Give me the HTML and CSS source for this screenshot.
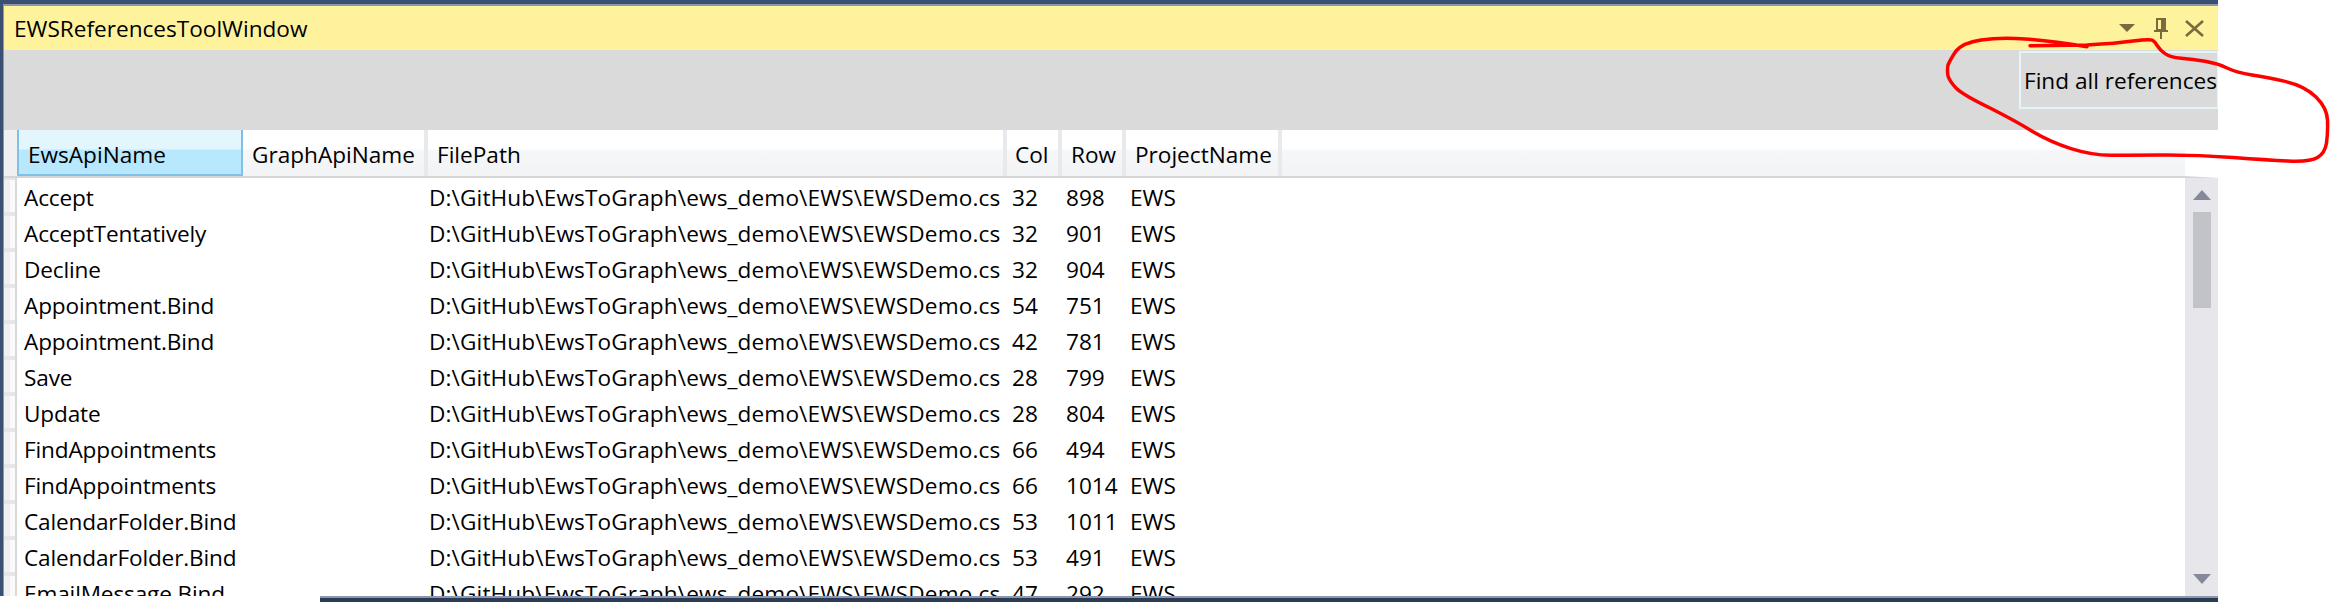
FILE: index.html
```html
<!DOCTYPE html>
<html lang="en">
<head>
    <meta charset="UTF-8">
    <title>EWSReferencesToolWindow</title>
    <link rel="stylesheet" href="styles.css">
</head>
<body>
    <div class="window">
        <div class="titlebar">
            <span class="title">EWSReferencesToolWindow</span>
            <div class="title-icons">
                <svg width="16" height="8" viewBox="0 0 16 8"><path d="M0 0H16L8 8Z" fill="#7a6a3e"/></svg>
                <svg class="pin" width="14" height="21" viewBox="0 0 14 21"><path d="M3 1H11V12H3Z" fill="none" stroke="#7a6a3e" stroke-width="2"/><path d="M7 0H12V13H7ZM0 12H14V14H0ZM6 14H8V21H6Z" fill="#7a6a3e"/></svg>
                <svg width="19" height="17" viewBox="0 0 19 17"><path d="M1 1L18 16M18 1L1 16" fill="none" stroke="#7a6a3e" stroke-width="2.6"/></svg>
            </div>
        </div>
        <div class="toolbar">
            <button class="find-btn">Find all references</button>
        </div>
        <div class="header">
            <div class="gutter-head"></div>
            <div class="col-head active c-name">EwsApiName</div>
            <div class="col-head c-graph">GraphApiName</div>
            <div class="col-head c-path">FilePath</div>
            <div class="col-head c-col">Col</div>
            <div class="col-head c-row">Row</div>
            <div class="col-head c-proj">ProjectName</div>
            <div class="col-head filler"></div>
        </div>
        <div class="body">
            <div class="rows">
                <div class="row"><i></i><span>Accept</span><span></span><span>D:\GitHub\EwsToGraph\ews_demo\EWS\EWSDemo.cs</span><span>32</span><span>898</span><span>EWS</span></div>
                <div class="row"><i></i><span>AcceptTentatively</span><span></span><span>D:\GitHub\EwsToGraph\ews_demo\EWS\EWSDemo.cs</span><span>32</span><span>901</span><span>EWS</span></div>
                <div class="row"><i></i><span>Decline</span><span></span><span>D:\GitHub\EwsToGraph\ews_demo\EWS\EWSDemo.cs</span><span>32</span><span>904</span><span>EWS</span></div>
                <div class="row"><i></i><span>Appointment.Bind</span><span></span><span>D:\GitHub\EwsToGraph\ews_demo\EWS\EWSDemo.cs</span><span>54</span><span>751</span><span>EWS</span></div>
                <div class="row"><i></i><span>Appointment.Bind</span><span></span><span>D:\GitHub\EwsToGraph\ews_demo\EWS\EWSDemo.cs</span><span>42</span><span>781</span><span>EWS</span></div>
                <div class="row"><i></i><span>Save</span><span></span><span>D:\GitHub\EwsToGraph\ews_demo\EWS\EWSDemo.cs</span><span>28</span><span>799</span><span>EWS</span></div>
                <div class="row"><i></i><span>Update</span><span></span><span>D:\GitHub\EwsToGraph\ews_demo\EWS\EWSDemo.cs</span><span>28</span><span>804</span><span>EWS</span></div>
                <div class="row"><i></i><span>FindAppointments</span><span></span><span>D:\GitHub\EwsToGraph\ews_demo\EWS\EWSDemo.cs</span><span>66</span><span>494</span><span>EWS</span></div>
                <div class="row"><i></i><span>FindAppointments</span><span></span><span>D:\GitHub\EwsToGraph\ews_demo\EWS\EWSDemo.cs</span><span>66</span><span>1014</span><span>EWS</span></div>
                <div class="row"><i></i><span>CalendarFolder.Bind</span><span></span><span>D:\GitHub\EwsToGraph\ews_demo\EWS\EWSDemo.cs</span><span>53</span><span>1011</span><span>EWS</span></div>
                <div class="row"><i></i><span>CalendarFolder.Bind</span><span></span><span>D:\GitHub\EwsToGraph\ews_demo\EWS\EWSDemo.cs</span><span>53</span><span>491</span><span>EWS</span></div>
                <div class="row"><i></i><span>EmailMessage.Bind</span><span></span><span>D:\GitHub\EwsToGraph\ews_demo\EWS\EWSDemo.cs</span><span>47</span><span>292</span><span>EWS</span></div>
            </div>
            <div class="scrollbar">
                <svg width="18" height="10" viewBox="0 0 18 10"><path d="M0 10L9 0L18 10Z" fill="#868999"/></svg>
                <div class="thumb"></div>
                <div class="track"></div>
                <svg width="18" height="10" viewBox="0 0 18 10"><path d="M0 0L9 10L18 0Z" fill="#868999"/></svg>
            </div>
        </div>
    </div>
    <div class="bottom-edge"></div>
    <!-- red marker scribble round the button -->
    <svg class="scribble" width="2330" height="602" viewBox="0 0 2330 602">
        <path d="M2030 45.7L2087 45Q2117 43.3 2133 41Q2150 39 2152.5 40.3Q2155 41.7 2157.5 46Q2160 50 2165 53.6Q2170 57.3 2181 58.3Q2193 59.3 2205 61.3Q2217 63.3 2227 68Q2237 72.7 2252 75Q2267 77.3 2286 81.6Q2305 86 2316 97Q2327 108 2327.5 120Q2328 133 2326.5 143Q2325 153 2317.5 157.5Q2310 162 2288 161Q2267 160 2233 157.5Q2200 155 2166 155Q2133 155 2113 155.3Q2093 155.7 2071 148.7Q2050 141.7 2033 131.7Q2017 121.7 1990 108Q1963 95 1956 88Q1950 81.7 1948 76Q1947 70 1948 65Q1950 60 1956 51Q1963 42.7 1981 40Q2000 37.3 2025 39Q2050 40.7 2087 46.7" fill="none" stroke="#ff0000" stroke-width="3.5" stroke-linecap="round" stroke-linejoin="round"/>
    </svg>
</body>
</html>
```

FILE: styles.css
```css
html, body {
    margin: 0;
    height: 602px;
    overflow: hidden;
    background-color: #fff;
}
body {
    font-family: "Open Sans", "Noto Sans", sans-serif;
    font-size: 22.6px;
    color: #000;
    position: relative;
}
.window {
    width: 2218px;
    height: 596px;
    box-sizing: border-box;
    border-top: 4px solid #3a4f72;
    border-left: 3px solid #3a4f72;
    padding-left: 1px;
    display: flex;
    flex-direction: column;
    background-color: #8a97ad;
}
.titlebar {
    height: 46px;
    flex-shrink: 0;
    box-sizing: border-box;
    border-top: 2px solid #8a97ad;
    background-color: #fff29d;
    display: flex;
    align-items: center;
    justify-content: space-between;
    padding-left: 10px;
}
.title-icons {
    display: flex;
    align-items: center;
    gap: 17px;
    padding-right: 14px;
}
.title-icons .pin {
    margin-left: 2px;
}
.toolbar {
    height: 80px;
    flex-shrink: 0;
    background-color: #dadada;
    display: flex;
    justify-content: flex-end;
    align-items: flex-start;
}
.find-btn {
    margin-top: 1px;
    width: 199px;
    height: 58px;
    box-sizing: border-box;
    border: 2px solid #e3f5f9;
    border-right-width: 1px;
    background-color: #dadada;
    color: #000;
    font: inherit;
    padding: 0 0 0 3px;
    text-align: left;
    white-space: nowrap;
    overflow: hidden;
}
.header {
    height: 48px;
    flex-shrink: 0;
    display: flex;
    box-sizing: border-box;
    border-bottom: 2px solid #d5d5d5;
    border-right: 33px solid #fff;
    background-color: #fff;
}
.gutter-head {
    width: 13px;
    flex-shrink: 0;
    background-color: #f0f0f0;
}
.col-head {
    flex-shrink: 0;
    box-sizing: border-box;
    background: linear-gradient(#fff 0, #fff 19px, #f6f7f8 20px, #f2f3f5 100%);
    border-right: 4px solid #e8e9ec;
    padding-left: 9px;
    line-height: 50px;
    white-space: nowrap;
    overflow: hidden;
}
.col-head.active {
    background: linear-gradient(#e3f6fd 0, #e3f6fd 19px, #b8e8fd 20px, #b8e8fd 100%);
    border: 2px solid #7fc0e4;
    border-width: 0 2px 2px 2px;
}
.c-name { width: 226px; }
.c-graph { width: 185px; }
.c-path { width: 579px; }
.c-col { width: 55px; padding-left: 8px; }
.c-row { width: 64px; }
.c-proj { width: 156px; }
.filler {
    flex: 1;
    border-right: 0;
    padding: 0;
}
.body {
    flex: 1;
    min-height: 0;
    display: flex;
    background-color: #fff;
}
.rows {
    flex: 1;
    min-width: 0;
    overflow: hidden;
}
.row {
    height: 36px;
    display: grid;
    grid-template-columns: 13px 226px 185px 579px 55px 64px 1fr;
    white-space: nowrap;
    line-height: 39px;
}
.row i {
    height: 36px;
    box-sizing: border-box;
    border-right: 2px solid #d9d9d9;
    background:
        linear-gradient(#e6e6e6, #e6e6e6) top / 100% 2px no-repeat,
        linear-gradient(#e6e6e6, #e6e6e6) bottom / 100% 2px no-repeat,
        linear-gradient(to right, #f0f0f0 6px, #fafafa 6px);
}
.row span {
    padding-left: 5px;
}
.row span:nth-child(2) {
    padding-left: 7px;
    letter-spacing: -0.15px;
}
.row span:nth-child(4) {
    padding-left: 1px;
    letter-spacing: 0.13px;
}
.row span:nth-child(6) {
    padding-left: 4px;
}
.row span:nth-child(7) {
    padding-left: 4px;
}
.scrollbar {
    width: 33px;
    flex-shrink: 0;
    background-color: #e6e6eb;
    display: flex;
    flex-direction: column;
    align-items: center;
    padding: 12px 0;
    box-sizing: border-box;
}
.thumb {
    width: 18px;
    height: 96px;
    margin-top: 12px;
    background-color: #c2c3c9;
}
.track {
    flex: 1;
}
.bottom-edge {
    margin-left: 320px;
    width: 1898px;
    height: 6px;
    box-sizing: border-box;
    border-top: 2px solid #8a97ad;
    background-color: #2b3a55;
}
.scribble {
    position: absolute;
    left: 0;
    top: 0;
    pointer-events: none;
}
```
